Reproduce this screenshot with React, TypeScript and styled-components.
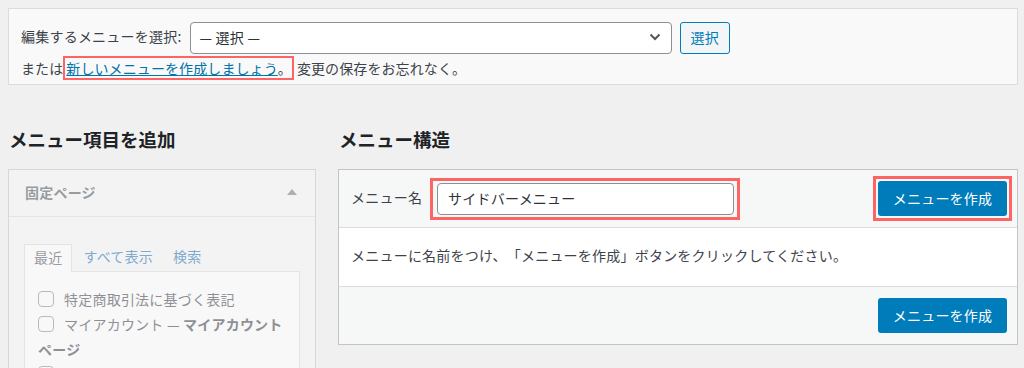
import styled, { createGlobalStyle } from 'styled-components';

const GlobalStyle = createGlobalStyle`
  body {
    margin: 0;
    background: #f0f0f1;
    font-family: "Noto Sans CJK JP", "Noto Sans", sans-serif;
    font-size: 14px;
    letter-spacing: 0.22px;
    text-spacing-trim: space-all;
    color: #3c434a;
  }
`

const Page = styled.div`
  padding: 8px 6px 0 8px;
`

const SelectBox = styled.div`
  height: 77px;
  box-sizing: border-box;
  border: 1px solid #dcdcde;
  background: #f9f9f9;
  padding: 11px 12px 0 12px;
`

const Row = styled.div`
  display: flex;
  align-items: center;
  gap: 8px;
`

const Label = styled.span`
  color: #3c434a;
  line-height: 32px;
  padding-bottom: 3px;
`

const Select = styled.div`
  width: 482px;
  height: 32px;
  box-sizing: border-box;
  border: 1px solid #8c8f94;
  border-radius: 4px;
  background: #fff;
  display: flex;
  align-items: center;
  justify-content: space-between;
  padding: 0 10px 2px 9px;
  color: #2c3338;
`

const OutlineButton = styled.button`
  height: 32px;
  padding: 0 10px 2px;
  border: 1px solid #007cba;
  border-radius: 3px;
  background: #f3f5f6;
  color: #007cba;
  font-family: inherit;
  font-size: 14px;
  letter-spacing: inherit;
`

const Note = styled.div`
  display: flex;
  align-items: center;
  margin-top: 1px;
  line-height: 18px;
  letter-spacing: 0.1px;
`

const NoteTail = styled.span`
  margin-left: 3px;
`

const Highlight = styled.span<{ $width: number; $pad: string }>`
  display: inline-flex;
  align-items: center;
  border: ${p => p.$width}px solid #ff6464;
  padding: ${p => p.$pad};
`

const Link = styled.a`
  color: #0073aa;
  text-decoration: underline;
`

const Columns = styled.div`
  display: grid;
  grid-template-columns: 308px 680px;
  gap: 22px;
  margin-top: 42px;
`

const Heading = styled.h2`
  margin: 0 0 18px 1px;
  font-size: 18.5px;
  font-weight: 700;
  line-height: 24px;
  letter-spacing: 0;
  color: #1d2327;
`

const SidePanel = styled.div`
  border: 1px solid #c3c4c7;
  background: #f6f7f7;
  opacity: 0.55;
  height: 220px;
  overflow: hidden;
`

const SideHeader = styled.div`
  height: 47px;
  box-sizing: border-box;
  display: flex;
  align-items: center;
  justify-content: space-between;
  padding: 0 16px 3px;
  border-bottom: 1px solid #dcdcde;
  font-weight: 700;
  color: #50575e;
`

const Triangle = styled.span`
  width: 0;
  height: 0;
  border-left: 5px solid transparent;
  border-right: 5px solid transparent;
  border-bottom: 6px solid #787c82;
  margin-right: 2px;
`

const SideBody = styled.div`
  padding: 26px 15px 0 15px;
`

const Tabs = styled.div`
  display: flex;
  align-items: flex-end;
`

const Tab = styled.span<{ $active?: boolean }>`
  height: 28px;
  box-sizing: border-box;
  display: flex;
  align-items: center;
  padding: ${p => (p.$active ? '0 9px 4px' : '0 8px 4px 10px')};
  color: ${p => (p.$active ? '#50575e' : '#2271b1')};
  border: ${p => (p.$active ? '1px solid #dcdcde' : '1px solid transparent')};
  border-bottom: none;
  background: ${p => (p.$active ? '#fff' : 'transparent')};
  margin-bottom: ${p => (p.$active ? '-1px' : '0')};
  position: relative;
`

const TabPanel = styled.div`
  border: 1px solid #dcdcde;
  background: #fff;
  padding: 15px 13px 12px;
  height: 200px;
`

const CheckItem = styled.label`
  display: block;
  min-height: 25px;
  line-height: 25px;
  color: #3c434a;
`

const Box = styled.span`
  display: inline-block;
  width: 16px;
  height: 16px;
  box-sizing: border-box;
  border: 1px solid #8c8f94;
  border-radius: 4px;
  background: #fff;
  vertical-align: -2px;
  margin-right: 10px;
`

const MainPanel = styled.div`
  border: 1px solid #c3c4c7;
  background: #f6f7f7;
`

const MainHeader = styled.div`
  height: 57px;
  display: flex;
  align-items: center;
  justify-content: space-between;
  padding: 0 5px 0 12px;
  border-bottom: 1px solid #dcdcde;
`

const NameField = styled.div`
  display: flex;
  align-items: center;
  gap: 8px;
`

const FieldLabel = styled.span`
  padding-bottom: 3px;
`

const TextInput = styled.div`
  width: 297px;
  height: 32px;
  box-sizing: border-box;
  border: 1px solid #8c8f94;
  border-radius: 4px;
  background: #fff;
  display: flex;
  align-items: center;
  padding: 0 10px 2px;
  color: #2c3338;
`

const PrimaryButton = styled.button`
  width: 129px;
  height: 35px;
  padding: 0 0 2px;
  border: none;
  border-radius: 3px;
  background: #007cba;
  color: #fff;
  font-family: inherit;
  font-size: 14px;
  letter-spacing: inherit;
`

const MainBody = styled.div`
  height: 59px;
  box-sizing: border-box;
  display: flex;
  align-items: center;
  padding: 0 12px 4px;
  background: #fff;
  border-bottom: 1px solid #dcdcde;
`

const MainFooter = styled.div`
  height: 57px;
  display: flex;
  align-items: center;
  justify-content: flex-end;
  padding: 0 10px;
`

export default function App() {
  return (
    <Page>
      <GlobalStyle />
      <SelectBox>
        <Row>
          <Label>編集するメニューを選択:</Label>
          <Select>
            <span>— 選択 —</span>
            <svg width="12" height="8" viewBox="0 0 12 8">
              <path d="M1.5 1.5 L6 6 L10.5 1.5" fill="none" stroke="#50575e" strokeWidth="2" />
            </svg>
          </Select>
          <OutlineButton>選択</OutlineButton>
        </Row>
        <Note>
          <span>または</span>
          <Highlight $width={2} $pad="1px 0 1px 1px">
            <Link>新しいメニューを作成しましょう</Link>。
          </Highlight>
          <NoteTail>変更の保存をお忘れなく。</NoteTail>
        </Note>
      </SelectBox>

      <Columns>
        <div>
          <Heading>メニュー項目を追加</Heading>
          <SidePanel>
            <SideHeader>
              <span>固定ページ</span>
              <Triangle />
            </SideHeader>
            <SideBody>
              <Tabs>
                <Tab $active>最近</Tab>
                <Tab>すべて表示</Tab>
                <Tab>検索</Tab>
              </Tabs>
              <TabPanel>
                <CheckItem><Box />特定商取引法に基づく表記</CheckItem>
                <CheckItem><Box />マイアカウント — <b>マイアカウントページ</b></CheckItem>
                <CheckItem><Box /></CheckItem>
              </TabPanel>
            </SideBody>
          </SidePanel>
        </div>

        <div>
          <Heading>メニュー構造</Heading>
          <MainPanel>
            <MainHeader>
              <NameField>
                <FieldLabel>メニュー名</FieldLabel>
                <Highlight $width={3} $pad="2px 3px 2px 4px">
                  <TextInput>サイドバーメニュー</TextInput>
                </Highlight>
              </NameField>
              <Highlight $width={3} $pad="2px">
                <PrimaryButton>メニューを作成</PrimaryButton>
              </Highlight>
            </MainHeader>
            <MainBody>メニューに名前をつけ、「メニューを作成」ボタンをクリックしてください。</MainBody>
            <MainFooter>
              <PrimaryButton>メニューを作成</PrimaryButton>
            </MainFooter>
          </MainPanel>
        </div>
      </Columns>
    </Page>
  );
}
